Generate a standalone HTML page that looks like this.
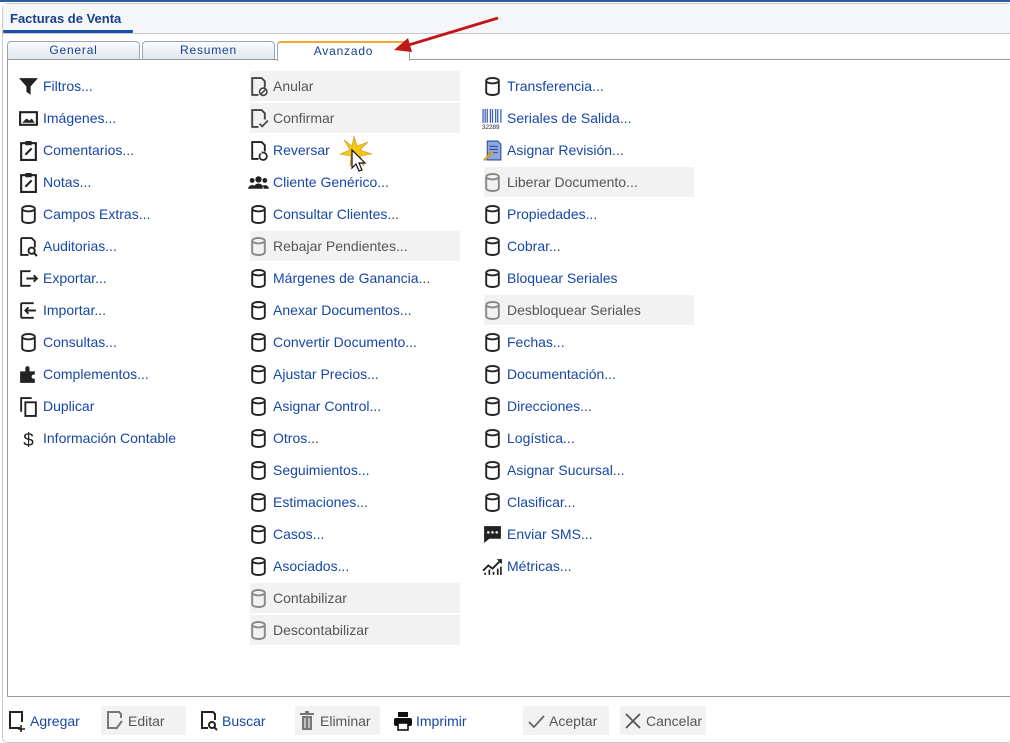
<!DOCTYPE html><html><head><meta charset="utf-8"><style>
*{margin:0;padding:0;box-sizing:border-box}
body{width:1010px;height:741px;background:#fff;position:relative;overflow:hidden;font-family:"Liberation Sans","DejaVu Sans",sans-serif;font-size:14px}
.a{position:absolute}
.it{position:absolute;height:30px;width:210px;display:flex;align-items:center;color:#1747a6}
.it svg{width:21px;height:21px;margin-left:-2px;margin-right:4px;flex:none}
.d{background:#f2f2f2;color:#555}
.tab{position:absolute;top:41px;height:19px;border:1px solid #9aa6b5;border-bottom:none;border-radius:4px 4px 0 0;background:linear-gradient(#fafbfd,#dfe6ef);color:#1a3f8c;font-size:12px;text-align:center;line-height:17px;letter-spacing:.8px}
.b{position:absolute;top:706px;height:29px;display:flex;align-items:center;color:#1747a6;font-size:14px}
.b svg{width:20px;height:22px;margin-right:3px}
</style></head><body>
<div class="a" style="left:0;top:0;width:1010px;height:2px;background:#2a5ca8"></div>
<div class="a" style="left:2px;top:3px;width:1010px;height:740px;border:1px solid #c9c9c9;border-radius:5px;background:#fff"></div>
<div class="a" style="left:3px;top:4px;width:1007px;height:29px;background:#f5f6f8"></div>
<div class="a" style="left:10px;top:11px;font-weight:bold;color:#1a3f8c;font-size:13px">Facturas de Venta</div>
<div class="a" style="left:3px;top:30px;width:130px;height:3px;background:#1a4fa8;border-radius:1px"></div>
<div class="a" style="left:3px;top:33px;width:1007px;height:1px;background:#c8c8c8"></div>
<div class="tab" style="left:7px;width:133px">General</div>
<div class="tab" style="left:142px;width:133px">Resumen</div>
<div class="tab" style="left:277px;width:133px;background:#fff;border-top:2px solid #f0a92e;z-index:2;height:20px">Avanzado</div>
<div class="a" style="left:7px;top:59px;width:1010px;height:638px;border:1px solid #9a9a9a;background:#fff"></div>
<svg class="a" style="left:390px;top:14px;z-index:3" width="112" height="40"><line x1="108" y1="4" x2="12" y2="33" stroke="#c01818" stroke-width="3"/><polygon points="4,36 18,24 22,38" fill="#c01818"/></svg>
<svg width="0" height="0" style="position:absolute"><defs>
<symbol id="cy" viewBox="0 0 20 20"><path d="M4 4.5a6 2.6 0 0 1 12 0v11a6 2.6 0 0 1-12 0z M4 4.5a6 2.6 0 0 0 12 0" fill="none" stroke="currentColor" stroke-width="1.8"/></symbol>
<symbol id="dc" viewBox="0 0 20 20"><path d="M10 18H4V2h9l3 3v6" fill="none" stroke="currentColor" stroke-width="1.8"/></symbol>
</defs></svg>
<!-- column 1 -->
<div class="it" style="left:20px;top:71px"><svg viewBox="0 0 20 20"><path d="M1 2h18l-7 8v8l-4-3v-5z" fill="#222"/></svg>Filtros...</div>
<div class="it" style="left:20px;top:103px"><svg viewBox="0 0 20 20"><rect x="2" y="4" width="16" height="12" fill="none" stroke="#222" stroke-width="2"/><path d="M4 14l4-4 3 2 2-2 3 4z" fill="#222"/></svg>Imágenes...</div>
<div class="it" style="left:20px;top:135px"><svg viewBox="0 0 20 20"><rect x="3" y="3" width="14" height="16" fill="none" stroke="#222" stroke-width="2"/><rect x="7" y="1" width="6" height="4" fill="#222"/><path d="M7 14l6-6" stroke="#222" stroke-width="2"/></svg>Comentarios...</div>
<div class="it" style="left:20px;top:167px"><svg viewBox="0 0 20 20"><rect x="3" y="3" width="14" height="16" fill="none" stroke="#222" stroke-width="2"/><rect x="7" y="1" width="6" height="4" fill="#222"/><path d="M7 14l6-6" stroke="#222" stroke-width="2"/></svg>Notas...</div>
<div class="it" style="left:20px;top:199px"><svg style="color:#222"><use href="#cy"/></svg>Campos Extras...</div>
<div class="it" style="left:20px;top:231px"><svg viewBox="0 0 20 20"><path d="M3 2h10l3 3v6M3 2v16h7" fill="none" stroke="#222" stroke-width="1.8"/><circle cx="13" cy="14" r="3" fill="none" stroke="#222" stroke-width="1.8"/><path d="M15 16l3 3" stroke="#222" stroke-width="2"/></svg>Auditorias...</div>
<div class="it" style="left:20px;top:263px"><svg viewBox="0 0 20 20"><path d="M12 3H3v14h9" fill="none" stroke="#222" stroke-width="1.8"/><path d="M8 10h10M15 7l3 3-3 3" fill="none" stroke="#222" stroke-width="1.8"/></svg>Exportar...</div>
<div class="it" style="left:20px;top:295px"><svg viewBox="0 0 20 20"><path d="M3 3v14M3 3h12M3 17h12" fill="none" stroke="#222" stroke-width="1.8"/><path d="M17 10H7M10 7l-3 3 3 3" fill="none" stroke="#222" stroke-width="1.8"/></svg>Importar...</div>
<div class="it" style="left:20px;top:327px"><svg style="color:#222"><use href="#cy"/></svg>Consultas...</div>
<div class="it" style="left:20px;top:359px"><svg viewBox="0 0 20 20"><path d="M2 7h5V4a2 2 0 0 1 4 0v3h5v3h-1a2 2 0 0 0 0 4h1v4H2z" fill="#222"/></svg>Complementos...</div>
<div class="it" style="left:20px;top:391px"><svg viewBox="0 0 20 20"><path d="M3 15V2h10" fill="none" stroke="#222" stroke-width="1.8"/><rect x="7" y="6" width="10" height="13" fill="none" stroke="#222" stroke-width="1.8"/></svg>Duplicar</div>
<div class="it" style="left:20px;top:423px"><svg viewBox="0 0 20 20"><text x="5" y="17" font-size="18" fill="#222" font-family="Liberation Sans">$</text></svg>Información Contable</div>
<!-- column 2 -->
<div class="it d" style="left:250px;top:71px"><svg viewBox="0 0 20 20"><use href="#dc" style="color:#444"/><circle cx="14.5" cy="15" r="3.5" fill="none" stroke="#444" stroke-width="1.5"/><path d="M12 17.5l5-5" stroke="#444" stroke-width="1.5"/></svg>Anular</div>
<div class="it d" style="left:250px;top:103px"><svg viewBox="0 0 20 20"><use href="#dc" style="color:#444"/><path d="M11 15l2.5 2.5L19 12" fill="none" stroke="#444" stroke-width="1.6"/></svg>Confirmar</div>
<div class="it" style="left:250px;top:135px"><svg viewBox="0 0 20 20"><use href="#dc" style="color:#222"/><path d="M12 13a3.5 3.5 0 1 0 2.5-1" fill="none" stroke="#222" stroke-width="1.6"/><path d="M13 10.5l2 1.5-2 1.5z" fill="#222"/></svg>Reversar</div>
<div class="it" style="left:250px;top:167px"><svg viewBox="0 0 20 20"><circle cx="10" cy="7" r="3" fill="#222"/><circle cx="4" cy="8" r="2.3" fill="#222"/><circle cx="16" cy="8" r="2.3" fill="#222"/><path d="M5 16a5 5 0 0 1 10 0zM0 16a4 4 0 0 1 6-3v3zM20 16a4 4 0 0 0-6-3v3z" fill="#222"/></svg>Cliente Genérico...</div>
<div class="it" style="left:250px;top:199px"><svg style="color:#222"><use href="#cy"/></svg>Consultar Clientes...</div>
<div class="it d" style="left:250px;top:231px"><svg style="color:#888"><use href="#cy"/></svg>Rebajar Pendientes...</div>
<div class="it" style="left:250px;top:263px"><svg style="color:#222"><use href="#cy"/></svg>Márgenes de Ganancia...</div>
<div class="it" style="left:250px;top:295px"><svg style="color:#222"><use href="#cy"/></svg>Anexar Documentos...</div>
<div class="it" style="left:250px;top:327px"><svg style="color:#222"><use href="#cy"/></svg>Convertir Documento...</div>
<div class="it" style="left:250px;top:359px"><svg style="color:#222"><use href="#cy"/></svg>Ajustar Precios...</div>
<div class="it" style="left:250px;top:391px"><svg style="color:#222"><use href="#cy"/></svg>Asignar Control...</div>
<div class="it" style="left:250px;top:423px"><svg style="color:#222"><use href="#cy"/></svg>Otros...</div>
<div class="it" style="left:250px;top:455px"><svg style="color:#222"><use href="#cy"/></svg>Seguimientos...</div>
<div class="it" style="left:250px;top:487px"><svg style="color:#222"><use href="#cy"/></svg>Estimaciones...</div>
<div class="it" style="left:250px;top:519px"><svg style="color:#222"><use href="#cy"/></svg>Casos...</div>
<div class="it" style="left:250px;top:551px"><svg style="color:#222"><use href="#cy"/></svg>Asociados...</div>
<div class="it d" style="left:250px;top:583px"><svg style="color:#888"><use href="#cy"/></svg>Contabilizar</div>
<div class="it d" style="left:250px;top:615px"><svg style="color:#888"><use href="#cy"/></svg>Descontabilizar</div>
<svg class="a" style="left:336px;top:134px" width="40" height="46"><polygon points="18,2 21,12 32,8 24,16 36,20 24,22 28,32 20,24 14,32 15,22 4,20 14,16 8,6 16,12" fill="#f5c518" stroke="#c9961a" stroke-width=".6"/><path d="M16 16v18l4-4 3 7 3-1-3-7h6z" fill="#fff" stroke="#111" stroke-width="1.2"/></svg>
<!-- column 3 -->
<div class="it" style="left:484px;top:71px"><svg style="color:#222"><use href="#cy"/></svg>Transferencia...</div>
<div class="it" style="left:484px;top:103px"><svg viewBox="0 0 20 20"><path d="M1 1v13M3 1v13M5 1v13M8 1v13M10 1v13M13 1v13M15 1v13M18 1v13" stroke="#3a5fb8" stroke-width="1.2"/><text x="0" y="20" font-size="6" fill="#223">32289</text></svg>Seriales de Salida...</div>
<div class="it" style="left:484px;top:135px"><svg viewBox="0 0 20 20"><path d="M5 1h10l3 3v15H5z" fill="#8fa8e0" stroke="#2b4aa0"/><path d="M7 6h8M7 9h8M7 12h8" stroke="#2b4aa0"/><path d="M1 19l8-9 2 2-8 8z" fill="#d49a2a"/></svg>Asignar Revisión...</div>
<div class="it d" style="left:484px;top:167px"><svg style="color:#888"><use href="#cy"/></svg>Liberar Documento...</div>
<div class="it" style="left:484px;top:199px"><svg style="color:#222"><use href="#cy"/></svg>Propiedades...</div>
<div class="it" style="left:484px;top:231px"><svg style="color:#222"><use href="#cy"/></svg>Cobrar...</div>
<div class="it" style="left:484px;top:263px"><svg style="color:#222"><use href="#cy"/></svg>Bloquear Seriales</div>
<div class="it d" style="left:484px;top:295px"><svg style="color:#888"><use href="#cy"/></svg>Desbloquear Seriales</div>
<div class="it" style="left:484px;top:327px"><svg style="color:#222"><use href="#cy"/></svg>Fechas...</div>
<div class="it" style="left:484px;top:359px"><svg style="color:#222"><use href="#cy"/></svg>Documentación...</div>
<div class="it" style="left:484px;top:391px"><svg style="color:#222"><use href="#cy"/></svg>Direcciones...</div>
<div class="it" style="left:484px;top:423px"><svg style="color:#222"><use href="#cy"/></svg>Logística...</div>
<div class="it" style="left:484px;top:455px"><svg style="color:#222"><use href="#cy"/></svg>Asignar Sucursal...</div>
<div class="it" style="left:484px;top:487px"><svg style="color:#222"><use href="#cy"/></svg>Clasificar...</div>
<div class="it" style="left:484px;top:519px"><svg viewBox="0 0 20 20"><path d="M2 2h16v12H7l-5 4z" fill="#222"/><circle cx="6" cy="8" r="1.2" fill="#fff"/><circle cx="10" cy="8" r="1.2" fill="#fff"/><circle cx="14" cy="8" r="1.2" fill="#fff"/></svg>Enviar SMS...</div>
<div class="it" style="left:484px;top:551px"><svg viewBox="0 0 20 20"><path d="M1 14l5-5 4 3 8-8" fill="none" stroke="#222" stroke-width="1.8"/><path d="M14 3h5v5z" fill="#222"/><path d="M3 18v-2M7 18v-5M11 18v-3M15 18v-6M18 18v-8" stroke="#222" stroke-width="1.6"/></svg>Métricas...</div>
<!-- bottom -->
<div class="b" style="left:7px"><svg viewBox="0 0 20 22"><path d="M13 18H3V2h12v10" fill="none" stroke="#222" stroke-width="2"/><path d="M14 15v7M11 19h7" stroke="#222" stroke-width="1.6"/></svg>Agregar</div>
<div class="b" style="left:101px;width:85px;background:#f2f2f2;color:#555;padding-left:4px"><svg viewBox="0 0 20 22"><path d="M12 18H3V2h11l2 2v4" fill="none" stroke="#777" stroke-width="2"/><path d="M11 19l6-8" stroke="#777" stroke-width="2"/></svg>Editar</div>
<div class="b" style="left:199px"><svg viewBox="0 0 20 22"><path d="M9 18H3V2h11l2 2v6" fill="none" stroke="#222" stroke-width="2"/><circle cx="13" cy="15" r="3" fill="none" stroke="#222" stroke-width="2"/><path d="M15 17l3 3" stroke="#222" stroke-width="2"/></svg>Buscar</div>
<div class="b" style="left:295px;width:85px;background:#f2f2f2;color:#555;padding-left:2px"><svg viewBox="0 0 20 22"><path d="M3 4h14M8 2h4" stroke="#777" stroke-width="2"/><path d="M5 6h10v14H5z" fill="#777"/><path d="M8 8v10M12 8v10" stroke="#f2f2f2" stroke-width="1.2"/></svg>Eliminar</div>
<div class="b" style="left:393px"><svg viewBox="0 0 20 22"><rect x="5" y="2" width="10" height="5" fill="#111"/><rect x="1" y="8" width="18" height="8" rx="2" fill="#111"/><rect x="5" y="13" width="10" height="7" fill="#fff" stroke="#111" stroke-width="1.6"/></svg>Imprimir</div>
<div class="b" style="left:523px;width:86px;background:#f2f2f2;color:#555;padding-left:3px"><svg viewBox="0 0 20 22"><path d="M3 12l5 5 10-11" fill="none" stroke="#666" stroke-width="1.8"/></svg>Aceptar</div>
<div class="b" style="left:620px;width:86px;background:#f2f2f2;color:#555;padding-left:3px"><svg viewBox="0 0 20 22"><path d="M3 4l14 14M17 4L3 18" stroke="#555" stroke-width="1.8"/></svg>Cancelar</div>
</body></html>
